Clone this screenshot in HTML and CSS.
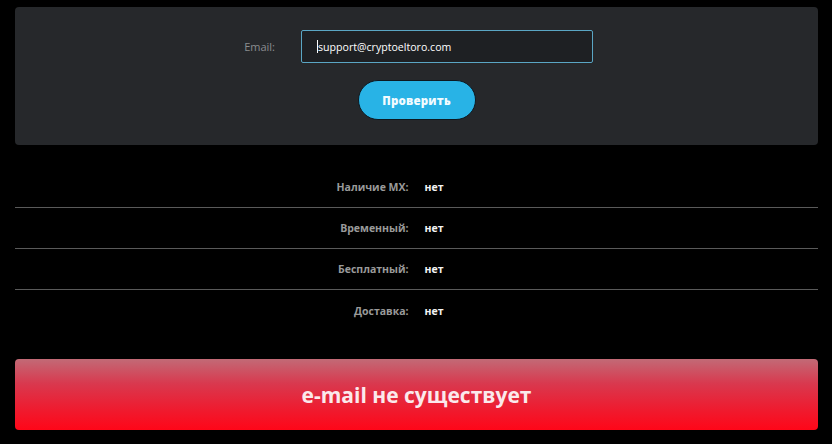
FILE: index.html
```html
<!DOCTYPE html>
<html lang="ru">
<head>
<meta charset="utf-8">
<link rel="stylesheet" href="styles.css">
</head>
<body>
<div class="page">
  <section class="panel">
    <div class="form-row">
      <label class="form-label" for="email">Email:</label>
      <div class="input"><span class="caret"></span>support@cryptoeltoro.com</div>
    </div>
    <div class="btn-row">
      <button class="btn">Проверить</button>
    </div>
  </section>

  <div class="results">
    <div class="row"><div class="k">Наличие МХ:</div><div class="v">нет</div></div>
    <div class="row"><div class="k">Временный:</div><div class="v">нет</div></div>
    <div class="row"><div class="k">Бесплатный:</div><div class="v">нет</div></div>
    <div class="row"><div class="k">Доставка:</div><div class="v">нет</div></div>
  </div>

  <div class="banner">e-mail не существует</div>
</div>
</body>
</html>
```

FILE: styles.css
```css
* { box-sizing: border-box; }
html, body { margin: 0; padding: 0; background: #000; }
body { font-family: "Open Sans", "Liberation Sans", sans-serif; color: #fff; }
.page { padding: 7px 14px 0 15px; }

.panel {
  background: #26282b;
  border-radius: 4px;
  height: 138px;
  padding-top: 23px;
}
.form-row {
  display: flex;
  justify-content: center;
  align-items: center;
  gap: 26px;
  padding-right: 23px;
}
.form-label {
  width: 58px;
  text-align: right;
  font-size: 11px;
  color: #8a8d90;
}
.input {
  width: 292px;
  height: 33px;
  border: 1px solid #5aa6c4;
  border-radius: 2px;
  background: #1e2023;
  display: flex;
  align-items: center;
  padding-left: 15px;
  font-size: 10.6px;
  color: #fff;
}
.caret {
  display: inline-block;
  width: 1px;
  height: 13px;
  background: #fff;
}
.btn-row {
  display: flex;
  justify-content: center;
  margin-top: 17px;
}
.btn {
  width: 118px;
  height: 40px;
  border-radius: 20px;
  border: 1px solid #0d1820;
  background: #28b3e6;
  color: #f2fbff;
  font-family: "Open Sans", sans-serif;
  font-weight: 800;
  font-size: 11.5px;
  letter-spacing: 0.2px;
  cursor: pointer;
}

.results { margin-top: 22px; }
.row {
  display: flex;
  height: 41px;
  align-items: center;
  border-bottom: 1px solid #5a5a5a;
  font-size: 10.5px;
  font-weight: 700;
}
.row:last-child { border-bottom: none; }
.k {
  flex: 0 0 50%;
  text-align: right;
  padding-right: 8px;
  color: #9a9a9a;
}
.v {
  flex: 0 0 50%;
  padding-left: 8px;
  color: #f4f4f4;
}

.banner {
  margin-top: 28px;
  height: 71px;
  border-radius: 4px;
  background: linear-gradient(to bottom, #c26a76 0%, #d9384e 35%, #ee1c30 70%, #ff0618 100%);
  display: flex;
  align-items: center;
  justify-content: center;
  font-size: 21px;
  font-weight: 700;
  color: #fbe9ec;
}
```
